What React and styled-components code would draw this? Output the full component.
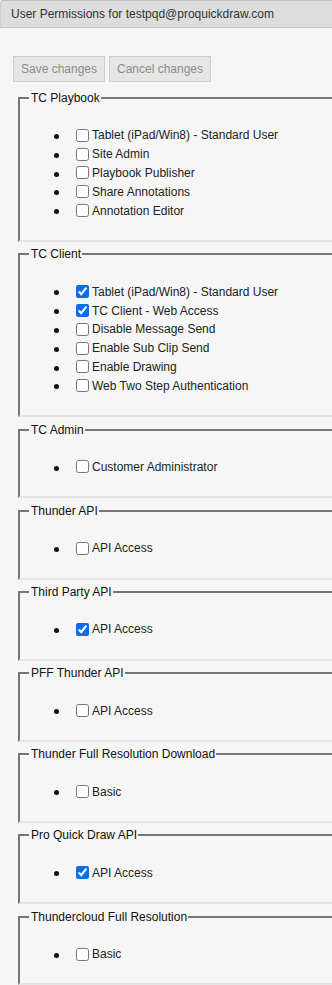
import React from 'react'
import styled, { createGlobalStyle } from 'styled-components'

const GlobalStyle = createGlobalStyle`
  html, body {
    margin: 0;
    padding: 0;
    background: #f6f6f6;
    overflow: hidden;
  }
  body {
    font-family: Tahoma, "Liberation Sans", Arial, sans-serif;
    font-size: 12px;
    color: #222;
  }
`

const Dialog = styled.div`
  width: 360px;
  background: #f6f6f6;
`

const TitleBar = styled.div`
  height: 26px;
  line-height: 26px;
  padding: 0 10px;
  background: #dddddd;
  border-top: 1px solid #bdbdbd;
  border-left: 1px solid #cfcfcf;
  border-bottom: 1px solid #c4c4c4;
  border-top-left-radius: 3px;
  color: #333;
  font-size: 12px;
`

const Body = styled.div`
  padding: 28px 0 0 13px;
`

const Toolbar = styled.div`
  display: flex;
  gap: 4px;
  margin-bottom: 9px;
`

const Button = styled.button`
  width: ${({ w }) => w}px;
  height: 26px;
  padding: 0;
  font-family: inherit;
  font-size: 12px;
  color: #8c8c8c;
  background: #e6e6e6;
  border: 1px solid #cccccc;
  border-radius: 0;
`

const Group = styled.fieldset`
  margin: 0 0 5.4px 5px;
  padding: 0 9px 20px;
  border-color: #767676 #e4e4e4 #e4e4e4 #767676;
  border-style: solid;
  border-width: 2px;
  box-shadow: inset 1px 1px 0 #f6f6f6;
`

const Legend = styled.legend`
  padding: 0 1px 0 2px;
  color: #111;
  font-size: 12px;
  line-height: 14px;
`

const List = styled.ul`
  margin: 21px 0 0;
  padding-left: 43px;
`

const Item = styled.li`
  display: flex;
  align-items: center;
  height: 18.8px;
  list-style: none;
  position: relative;

  &::before {
    content: '';
    position: absolute;
    left: -18px;
    top: 8px;
    width: 5px;
    height: 5px;
    border-radius: 50%;
    background: #111;
  }
`

const Check = styled.input.attrs({ type: 'checkbox' })`
  width: 13px;
  height: 13px;
  margin: 0 3px 0 4px;
  accent-color: #0b6ee8;
`

const groups = [
  {
    title: 'TC Playbook',
    items: [
      ['Tablet (iPad/Win8) - Standard User', false],
      ['Site Admin', false],
      ['Playbook Publisher', false],
      ['Share Annotations', false],
      ['Annotation Editor', false]
    ]
  },
  {
    title: 'TC Client',
    items: [
      ['Tablet (iPad/Win8) - Standard User', true],
      ['TC Client - Web Access', true],
      ['Disable Message Send', false],
      ['Enable Sub Clip Send', false],
      ['Enable Drawing', false],
      ['Web Two Step Authentication', false]
    ]
  },
  { title: 'TC Admin', items: [['Customer Administrator', false]] },
  { title: 'Thunder API', items: [['API Access', false]] },
  { title: 'Third Party API', items: [['API Access', true]] },
  { title: 'PFF Thunder API', items: [['API Access', false]] },
  { title: 'Thunder Full Resolution Download', items: [['Basic', false]] },
  { title: 'Pro Quick Draw API', items: [['API Access', true]] },
  { title: 'Thundercloud Full Resolution', items: [['Basic', false]] }
]

export default function App () {
  return (
    <>
      <GlobalStyle />
      <Dialog>
        <TitleBar>User Permissions for testpqd@proquickdraw.com</TitleBar>
        <Body>
          <Toolbar>
            <Button disabled w={92}>Save changes</Button>
            <Button disabled w={102}>Cancel changes</Button>
          </Toolbar>
          {groups.map(g => (
            <Group key={g.title}>
              <Legend>{g.title}</Legend>
              <List>
                {g.items.map(([label, on]) => (
                  <Item key={label}>
                    <Check defaultChecked={on} />
                    {label}
                  </Item>
                ))}
              </List>
            </Group>
          ))}
        </Body>
      </Dialog>
    </>
  )
}
